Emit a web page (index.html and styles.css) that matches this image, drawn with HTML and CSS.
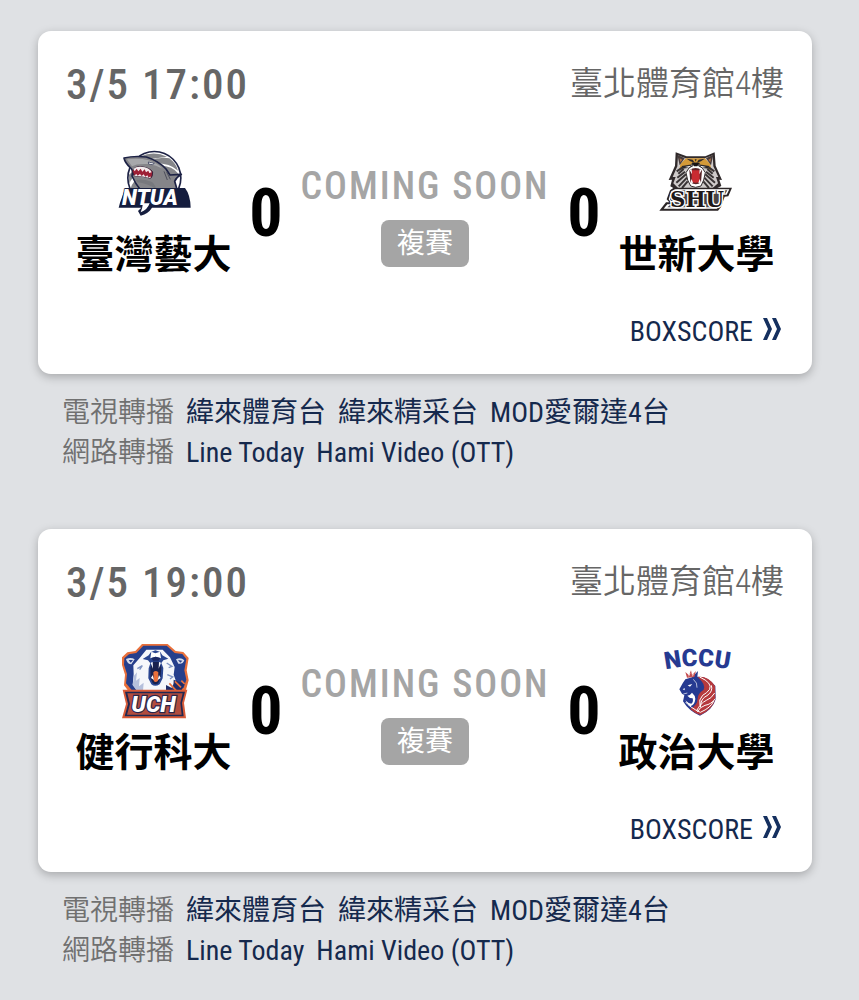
FILE: index.html
```html
<!DOCTYPE html>
<html lang="zh-Hant">
<head>
    <meta charset="UTF-8">
    <meta name="viewport" content="width=device-width, initial-scale=1.0">
    <title>賽程</title>
    <link rel="stylesheet" href="styles.css">
</head>
<body>

    <main class="schedule">
        <section class="game">
            <div class="card">
                <div class="card-header">
                    <span class="date">3/5 17:00</span>
                    <span class="place">臺北體育館4樓</span>
                </div>

                <div class="match">
                    <div class="team">
                        <svg class="logo" viewBox="24 15 240 228" role="img" aria-label="NTUA">
                            <circle cx="145" cy="114" r="82" fill="#1d2245"/>
                            <circle cx="145" cy="114" r="77" fill="#fff"/>
                            <path d="M103 49 Q145 32 183 50 Q150 54 122 59 Z M130 62 Q165 50 190 55 Q210 70 216 92 Q190 68 142 70 Z M158 77 Q200 76 218 102 L194 106 Q184 88 158 77 Z M69 104 Q80 98 84 88 L96 108 Q76 110 70 132 Z M74 145 Q80 122 99 116 L108 147 Z" fill="#85868a"/>
                            <path d="M54 54 Q84 47 121 51 Q157 62 180 87 L192 105 L226 103 Q211 112 206 124 L213 148 L102 148 Q89 132 78 108 Q83 90 72 82 Q57 68 54 54 Z" fill="#858589" stroke="#1d2245" stroke-width="5" stroke-linejoin="round"/>
                            <path d="M63 58 Q100 54 128 61 Q153 69 170 86 Q151 76 128 72 Q91 70 78 79 Z" fill="#a7a8ab"/>
                            <path d="M79 93 Q86 79 104 80 Q132 83 140 96 Q140 110 134 115 Q111 107 84 107 Z" fill="#9d1f35" stroke="#352038" stroke-width="3"/>
                            <path d="M82 87 l4 7 6-8 5 8 7-8 5 9 7-7 4 9 7-5 3 7 7-2 Q132 82 104 80 Q90 79 82 87 Z M84 107 l7-5 4 5 7-5 5 6 6-5 5 7 6-4 4 7 5-4 1 6 Q111 107 84 107 Z" fill="#f4ecee"/>
                            <path d="M127 66 L145 70 L139 74 L128 72 Z" fill="#fff" stroke="#1d2245" stroke-width="2"/>
                            <path d="M90 120 Q110 116 136 125 Q144 128 151 147 Q124 130 94 127 Z" fill="#77787d"/>
                            <path d="M174 94 L184 120 M182 96 L193 118" stroke="#4d4e5b" stroke-width="3" fill="none"/>
                            <path d="M58 144 H237 Q253 164 254 203 H138 Q127 221 104 227 L96 213 L106 203 H38 L42 188 Z" fill="#151d3e"/>
                            <text class="logo-text" x="48" y="195" font-size="65" fill="#fff" stroke="#151d3e" stroke-width="4">NTUA</text>
                            <path d="M111 190 L131 190 Q124 210 104 217 Q109 206 111 190 Z" fill="#fff"/>
                        </svg>
                        <h2 class="team-name">臺灣藝大</h2>
                    </div>
                    <div class="score">0</div>
                    <div class="status">
                        <p class="status-text">COMING SOON</p>
                        <span class="badge">複賽</span>
                    </div>
                    <div class="score">0</div>
                    <div class="team">
                        <svg class="logo" viewBox="21 15 240 228" role="img" aria-label="SHU">
                            <path d="M77 37 L110 49 H166 L194 37 L197 77 L216 120 L208 119 L214 138 L190 150 H80 L61 139 L66 119 L56 120 L75 77 Z" fill="#302a2b"/>
                            <path d="M84 46 L107 55 H164 L188 46 L190 79 L205 111 L198 111 L204 130 L184 148 H88 L70 130 L77 111 L68 111 L82 79 Z" fill="#cfcbca"/>
                            <path d="M91 72 L108 55 H164 L181 72 L184 92 L158 77 L137 68 L116 77 L88 91 Z" fill="#d49a38"/>
                            <path d="M82 44 L104 55 L89 76 Z M190 44 L168 55 L183 76 Z" fill="#463b3b"/>
                            <path d="M89 55 l8 4 -6 8 Z M183 55 l-8 4 6 8 Z" fill="#b57345"/>
                            <path d="M110 56 L128 59 L134 68 L121 64 Z M164 56 L146 59 L140 68 L153 64 Z M95 78 L128 73 L118 83 L98 86 Z M178 78 L145 73 L154 83 L175 86 Z M134 58 h6 l-3 7 Z" fill="#2d282a"/>
                            <path d="M105 81 L122 77 L117 83 Z M168 81 L151 77 L156 83 Z" fill="#fff"/>
                            <path d="M101 87 L85 101 M105 95 L82 113 M108 103 L79 128 M111 113 L86 139 M113 124 L96 144 M98 82 L80 94 M172 87 L188 101 M168 95 L191 113 M166 103 L195 128 M163 113 L188 139 M160 124 L177 144 M176 82 L193 94" stroke="#393435" stroke-width="6"/>
                            <path d="M117 84 L129 77 L126 69 H148 L145 77 L157 84 L166 98 L161 120 L153 138 Q136 146 122 138 L113 120 L108 98 Z" fill="#fff" stroke="#332d2f" stroke-width="3"/>
                            <path d="M126 69 H148 L142 79 H132 Z" fill="#171415"/>
                            <path d="M118 91 Q136 77 156 91 L153 127 Q138 139 121 127 Z" fill="#5a2528"/>
                            <path d="M125 91 H149 V126 Q137 131 125 126 Z" fill="#c92b31"/>
                            <path d="M119 90 l6-2 1 15 Z M155 90 l-6-2 -1 15 Z M121 128 l4-11 4 12 Z M153 128 l-4-11 -4 12 Z" fill="#fff"/>
                            <path d="M71 143 H246 L235 169 L224 170 L213 201 L204 212 H28 L48 187 H58 L50 178 L60 151 Z" fill="#2b2526"/>
                            <path d="M75 148 H238 L230 164 H219 L207 198 L200 206 H41 L52 193 H66 L56 178 L64 154 Z" fill="#fff"/>
                            <path d="M78 151 H232 L226 161 H216 L203 196 L196 202 H52 L59 196 H70 L60 178 L68 156 Z" fill="#4b4445"/>
                            <text class="logo-serif" x="60" y="200" font-size="64" fill="#1d1819" stroke="#fff" stroke-width="8">SHU</text>
                        </svg>
                        <h2 class="team-name">世新大學</h2>
                    </div>
                </div>

                <div class="card-footer">
                    <a class="boxscore" href="#boxscore-1">BOXSCORE
                        <svg class="arrows" viewBox="0 0 18 22" aria-hidden="true"><path d="M0 0h4l5 11-5 11H0l5-11zM9 0h4l5 11-5 11H9l5-11z"/></svg>
                    </a>
                </div>
            </div>

            <dl class="broadcast">
                <div class="broadcast-row">
                    <dt>電視轉播</dt>
                    <dd><a href="#tv">緯來體育台</a> <a href="#tv">緯來精采台</a> <a href="#tv">MOD愛爾達4台</a></dd>
                </div>
                <div class="broadcast-row">
                    <dt>網路轉播</dt>
                    <dd><a href="#web">Line Today</a> <a href="#web">Hami Video (OTT)</a></dd>
                </div>
            </dl>
        </section>

        <section class="game">
            <div class="card">
                <div class="card-header">
                    <span class="date">3/5 19:00</span>
                    <span class="place">臺北體育館4樓</span>
                </div>

                <div class="match">
                    <div class="team">
                        <svg class="logo" viewBox="24 24 240 228" role="img" aria-label="UCH">
                            <path d="M108 27 H185 L209 48 L232 51 L248 69 L242 106 L248 136 L240 164 L220 174 H72 L54 151 L57 119 L48 90 L48 67 L64 52 L88 48 Z" fill="#e9703b"/>
                            <path d="M112 32 H182 L206 54 L229 57 L241 72 L235 106 L241 134 L233 158 L215 169 H80 L60 145 L63 117 L54 89 L55 70 L69 58 L91 54 Z" fill="#263f8c"/>
                            <path d="M121 44 H170 L192 67 L206 96 L203 119 L209 136 L196 160 L178 170 H97 L80 150 L83 117 L82 91 L101 69 Z" fill="#f5f7fb"/>
                            <path d="M60 72 Q75 65 86 73 L76 88 Q64 88 60 72 Z M210 73 Q224 65 235 76 Q230 89 217 86 Z" fill="#d7dceb"/>
                            <path d="M68 75 L81 75 L74 83 Z M216 75 L229 77 L223 83 Z" fill="#263f8c"/>
                            <path d="M135 51 L148 46 L163 51 L169 61 L187 71 L172 76 L166 84 L172 99 L170 130 L161 148 Q147 157 136 148 L127 130 L128 100 L133 85 L126 76 L110 72 L128 61 Z" fill="#2a4691"/>
                            <path d="M136 50 L148 55 L162 50 L165 70 L149 65 L133 70 Z" fill="#fff"/>
                            <path d="M136 69 L149 65 L163 69 L158 77 H141 Z" fill="#1b2863"/>
                            <path d="M133 98 L141 80 H158 L166 98 L163 130 L157 145 Q148 151 140 144 L134 130 Z" fill="#18214e"/>
                            <path d="M142 112 Q149 104 157 112 L156 137 Q148 145 143 137 Z" fill="#e9703b"/>
                            <path d="M134 83 l6-2 1 20 Z M165 83 l-6-2 -1 20 Z M135 129 l5-9 4 15 Z M164 129 l-5-9 -4 15 Z" fill="#fff"/>
                            <path d="M84 122 L93 112 L90 137 L101 129 L99 154 L113 143 L111 167 L92 167 L80 150 Z" fill="#b5c0dc"/>
                            <path d="M182 84 L198 94 L188 98 M184 119 L200 126 L192 132 M94 101 L109 92 L101 104" fill="none" stroke="#7f94c3" stroke-width="4"/>
                            <path d="M203 134 L235 147 L225 169 L202 169 Z M180 150 L199 160 L200 172 L180 171 Z" fill="#1f2c68"/>
                            <path d="M190 145 L210 166 M207 139 L225 157 M226 137 L236 147" stroke="#e9703b" stroke-width="5"/>
                            <path d="M50 164 H244 L234 204 L240 250 H48 L60 207 Z" fill="#d95b38"/>
                            <path d="M57 170 H237 L228 204 L233 244 H56 L66 207 Z" fill="#202852"/>
                            <path d="M64 175 H230 L223 204 L227 239 H63 L72 207 Z" fill="#b24c3d"/>
                            <text class="logo-text" x="76" y="232" font-size="68" fill="#fff" stroke="#29254b" stroke-width="7">UCH</text>
                        </svg>
                        <h2 class="team-name">健行科大</h2>
                    </div>
                    <div class="score">0</div>
                    <div class="status">
                        <p class="status-text">COMING SOON</p>
                        <span class="badge">複賽</span>
                    </div>
                    <div class="score">0</div>
                    <div class="team">
                        <svg class="logo" viewBox="21 24 240 228" role="img" aria-label="NCCU">
                            <defs>
                                <path id="nccu-arc" d="M38 105 Q141 81 246 105"/>
                            </defs>
                            <text class="logo-block" font-size="72" fill="#263a91" text-anchor="middle"><textPath href="#nccu-arc" startOffset="50%">NCCU</textPath></text>
                            <path d="M126 127 L144 108 L142 125 Q173 123 196 153 L197 193 Q188 225 150 242 Q117 229 99 199 L103 181 L96 176 L88 163 L98 145 L106 133 Z" fill="#263a91"/>
                            <path d="M143 126 Q174 122 195 153 L196 192 Q188 224 151 240 Q133 234 120 222 Q143 211 143 190 Q143 176 161 164 Q169 150 143 126 Z" fill="#b6393d"/>
                            <path d="M149 126 Q188 144 179 163 Q171 174 158 181 Q145 194 150 211 M184 151 Q190 169 171 182 Q152 190 151 217 M194 174 Q184 191 169 196 Q151 205 140 227 M196 191 Q184 208 165 211 Q149 216 142 231" fill="none" stroke="#fff" stroke-width="3"/>
                            <path d="M106 196 Q114 205 124 206 Q131 202 128 190 Q118 190 112 182 Q121 181 126 173 Q135 180 136 192 Q134 210 121 214 Q111 207 106 196 Z" fill="#fff"/>
                            <path d="M107 201 Q118 216 151 232 Q183 218 191 198" fill="none" stroke="#fff" stroke-width="3"/>
                            <path d="M113 151 L127 147 L120 155 Z M98 163 L104 159 L104 166 Z" fill="#fff"/>
                            <path d="M130 133 Q143 143 141 158 M100 177 L112 174" fill="none" stroke="#fff" stroke-width="2"/>
                            <path d="M111 128 L106 111 L117 121 L123 106 L126 120 L138 108 L133 126 Z" fill="#c44c4f"/>
                            <path d="M116 124 L120 115 M127 124 L131 116" stroke="#fff" stroke-width="2"/>
                        </svg>
                        <h2 class="team-name">政治大學</h2>
                    </div>
                </div>

                <div class="card-footer">
                    <a class="boxscore" href="#boxscore-2">BOXSCORE
                        <svg class="arrows" viewBox="0 0 18 22" aria-hidden="true"><path d="M0 0h4l5 11-5 11H0l5-11zM9 0h4l5 11-5 11H9l5-11z"/></svg>
                    </a>
                </div>
            </div>

            <dl class="broadcast">
                <div class="broadcast-row">
                    <dt>電視轉播</dt>
                    <dd><a href="#tv">緯來體育台</a> <a href="#tv">緯來精采台</a> <a href="#tv">MOD愛爾達4台</a></dd>
                </div>
                <div class="broadcast-row">
                    <dt>網路轉播</dt>
                    <dd><a href="#web">Line Today</a> <a href="#web">Hami Video (OTT)</a></dd>
                </div>
            </dl>
        </section>
    </main>

</body>
</html>
```
FILE: styles.css
```css
/* General Styles */
* {
    box-sizing: border-box;
}

body {
    font-family: 'Roboto Condensed', 'Liberation Sans Narrow', Roboto, 'Noto Sans CJK TC', sans-serif;
    background-color: #dfe1e4;
    color: #666;
    margin: 0;
}

a {
    color: #15294d;
    text-decoration: none;
}

.schedule {
    padding: 31px 47px 0 38px;
}

.game {
    margin-bottom: 56px;
}

.game:last-child {
    margin-bottom: 0;
    padding-bottom: 24px;
}

/* Card */
.card {
    background-color: #fff;
    padding: 28px 28px 22px;
    border-radius: 13px;
    box-shadow: 0 3px 10px rgba(0, 0, 0, 0.25);
}

.card-header {
    display: flex;
    justify-content: space-between;
    align-items: center;
    line-height: 50px;
}

.date {
    font-size: 43px;
    font-weight: 500;
    letter-spacing: 2px;
}

.place {
    font-size: 33px;
    font-weight: 350;
}

/* Match */
.match {
    display: grid;
    grid-template-columns: 1fr 50px 268px 50px 1fr;
    margin-top: 36px;
}

.team {
    display: flex;
    flex-direction: column;
    align-items: center;
    gap: 10px;
}

.logo {
    width: 80px;
    height: 76px;
}

.logo-text,
.logo-serif,
.logo-block {
    font-family: Roboto, sans-serif;
    font-weight: 900;
    paint-order: stroke;
}

.logo-text {
    font-style: italic;
}

.logo-serif {
    font-family: 'DejaVu Serif', serif;
    font-weight: 700;
}

.team-name {
    margin: 0;
    color: #000;
    font-size: 39px;
    font-weight: 700;
    line-height: 48px;
    white-space: nowrap;
}

.score {
    align-self: center;
    padding-top: 2px;
    color: #000;
    font-size: 66px;
    font-weight: 700;
    text-align: center;
}

.status {
    display: flex;
    flex-direction: column;
    align-items: center;
    gap: 14px;
    padding-top: 21px;
}

.status-text {
    margin: 0;
    color: #a5a5a5;
    font-size: 38px;
    font-weight: 500;
    letter-spacing: 2px;
    line-height: 40px;
    white-space: nowrap;
}

.badge {
    background-color: #a5a5a5;
    color: #fff;
    padding: 0 16px;
    border-radius: 8px;
    font-size: 28px;
    line-height: 47px;
}

.card-footer {
    display: flex;
    justify-content: flex-end;
    margin-top: 33px;
}

.boxscore {
    display: flex;
    align-items: center;
    gap: 10px;
    font-size: 28px;
    line-height: 40px;
}

.arrows {
    width: 18px;
    height: 22px;
    margin: 0 3px 6px 0;
    fill: #15305f;
}

/* Broadcast */
.broadcast {
    margin: 19px 24px 0;
    font-size: 28px;
    line-height: 40px;
}

.broadcast-row {
    display: flex;
    gap: 12px;
}

.broadcast dt {
    flex: none;
    color: #707070;
    font-weight: 350;
}

.broadcast dd {
    display: flex;
    flex-wrap: wrap;
    column-gap: 12px;
    margin: 0;
}
```
